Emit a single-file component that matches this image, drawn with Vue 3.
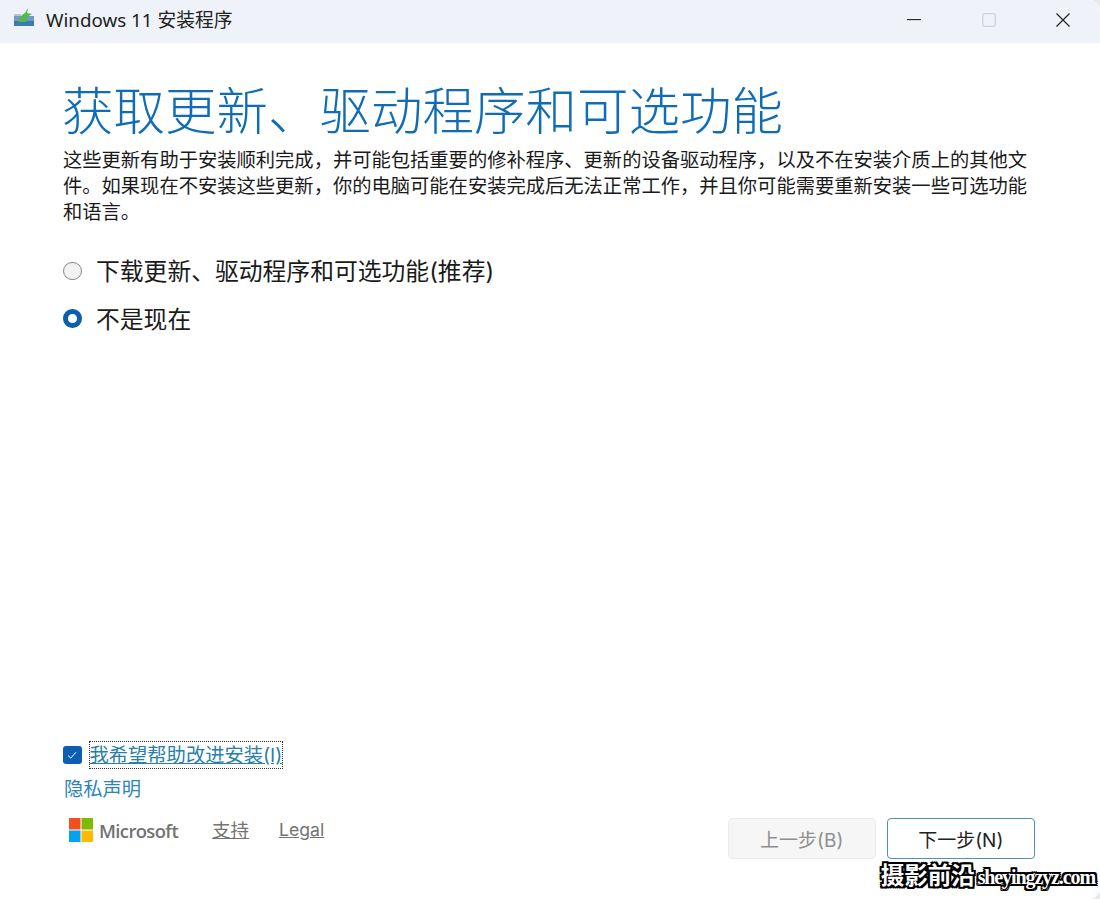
<template>
  <div class="setup-window">
    <div class="title-bar">
      <svg class="app-icon" viewBox="0 0 22 20" width="22" height="20">
        <path d="M1 7h7v6H1z" fill="#b9c6d2" />
        <path d="M1 9h20v10H1z" fill="#6f9cc0" />
        <path d="M1 14h20v5H1z" fill="#3f7bab" />
        <path d="M6 15c0-4 2-7 6-9l3-5-1 5 5 1-5 3-1 5z" fill="#55b84d" />
      </svg>
      <span class="app-title">Windows 11 安装程序</span>
      <div class="window-controls">
        <span class="control">
          <svg viewBox="0 0 14 14" width="14" height="14"><path d="M0 6.6h14" stroke="#222" stroke-width="1.1" /></svg>
        </span>
        <span class="control">
          <svg viewBox="0 0 14 14" width="14" height="14"><rect x="0.7" y="0.7" width="12.6" height="12.6" rx="1.5" fill="none" stroke="#cfd1d5" stroke-width="1.3" /></svg>
        </span>
        <span class="control">
          <svg viewBox="0 0 14 14" width="14" height="14"><path d="M0.5 0.5l13 13M13.5 0.5l-13 13" stroke="#222" stroke-width="1.2" /></svg>
        </span>
      </div>
    </div>

    <div class="content">
      <h1>获取更新、驱动程序和可选功能</h1>
      <p class="intro">这些更新有助于安装顺利完成，并可能包括重要的修补程序、更新的设备驱动程序，以及不在安装介质上的其他文件。如果现在不安装这些更新，你的电脑可能在安装完成后无法正常工作，并且你可能需要重新安装一些可选功能和语言。</p>

      <div class="options">
        <label v-for="opt in options" :key="opt.id" class="option" @click="selected = opt.id">
          <span class="radio" :class="{ checked: selected === opt.id }"></span>
          <span>{{ opt.label }}</span>
        </label>
      </div>

      <div class="bottom">
        <div class="improve">
          <span class="checkbox">
            <svg viewBox="0 0 12 12" width="12" height="12"><path d="M2 6.5l2.8 2.6L10 3.2" fill="none" stroke="#fff" stroke-width="1" /></svg>
          </span>
          <span class="improve-label">我希望帮助改进安装(I)</span>
        </div>
        <a class="privacy">隐私声明</a>
        <div class="footer">
          <div class="footer-left">
            <div class="ms-brand">
              <svg viewBox="0 0 24 24" width="24" height="24">
                <rect x="0" y="0" width="11.5" height="11.5" fill="#f25022" />
                <rect x="12.5" y="0" width="11.5" height="11.5" fill="#7fba00" />
                <rect x="0" y="12.5" width="11.5" height="11.5" fill="#00a4ef" />
                <rect x="12.5" y="12.5" width="11.5" height="11.5" fill="#ffb900" />
              </svg>
              <span class="ms-name">Microsoft</span>
            </div>
            <a class="foot-link support">支持</a>
            <a class="foot-link legal">Legal</a>
          </div>
          <div class="buttons">
            <button class="btn" disabled>上一步(B)</button>
            <button class="btn primary">下一步(N)</button>
          </div>
        </div>
      </div>
    </div>

    <div class="watermark"><span class="wm-cn">摄影前沿</span><span class="wm-en">sheyingzyz.com</span></div>
  </div>
</template>

<script setup>
import { ref } from 'vue'

const selected = ref('later')
const options = [
  { id: 'download', label: '下载更新、驱动程序和可选功能(推荐)' },
  { id: 'later', label: '不是现在' }
]
</script>

<style>
html, body {
  margin: 0;
  background: #e8e8e8;
}
</style>

<style scoped>
.setup-window {
  position: relative;
  width: 1100px;
  height: 899px;
  display: flex;
  flex-direction: column;
  background: #fff;
  color: #1a1a1a;
  font-family: "Inter", "Noto Sans CJK SC", sans-serif;
  overflow: hidden;
  border-radius: 0 10px 10px 0;
}

.title-bar {
  height: 37px;
  padding-bottom: 6px;
  flex-shrink: 0;
  display: flex;
  align-items: center;
  background: #eff3f9;
  padding-left: 13px;
}

.app-icon {
  margin-top: -4px;
}

.app-title {
  margin-left: 11px;
  font-size: 18.8px;
  color: #222;
  font-family: "Noto Sans", "Noto Sans CJK SC", sans-serif;
}

.window-controls {
  margin-left: auto;
  display: flex;
  gap: 60.5px;
  padding-right: 30px;
  padding-top: 2px;
  align-items: center;
}

.control {
  display: flex;
}

.content {
  flex: 1;
  display: flex;
  flex-direction: column;
  padding: 0 65px 0 63px;
}

h1 {
  margin: 37px 0 0 -1px;
  font-size: 51.5px;
  line-height: 62px;
  font-weight: 300;
  color: #0f6cb5;
  white-space: nowrap;
}

.intro {
  margin: 5px 0 0;
  width: 970px;
  font-size: 19.3px;
  line-height: 26px;
  color: #1a1a1a;
}

.options {
  margin-top: 30px;
  display: flex;
  flex-direction: column;
  gap: 13.5px;
}

.option {
  display: flex;
  align-items: center;
  gap: 14.5px;
  font-size: 23.8px;
  line-height: 34px;
  cursor: pointer;
}

.radio {
  width: 18.5px;
  height: 18.5px;
  margin-top: -2px;
  box-sizing: border-box;
  border-radius: 50%;
  border: 1px solid #8a8a8a;
  background: #f2f2f2;
}

.radio.checked {
  border: 5px solid #0a5fb0;
  background: #fff;
}

.bottom {
  margin-top: auto;
  padding-bottom: 40px;
}

.improve {
  display: flex;
  align-items: center;
  gap: 8px;
}

.checkbox {
  width: 18.5px;
  height: 18.5px;
  border-radius: 3px;
  background: #0a5fb0;
  display: flex;
  align-items: center;
  justify-content: center;
}

.improve-label {
  font-size: 19.3px;
  line-height: 26px;
  color: #2a7fa8;
  outline: 1px dotted #333;
  text-decoration: underline;
  white-space: nowrap;
}

.privacy {
  display: block;
  margin-top: 8px;
  margin-left: 1px;
  font-size: 19.3px;
  line-height: 26px;
  color: #2a86b8;
}

.footer {
  display: flex;
  justify-content: space-between;
  align-items: flex-end;
  margin-top: 15px;
}

.footer-left {
  display: flex;
  align-items: center;
  padding-left: 6px;
  margin-bottom: 16px;
}

.ms-brand {
  display: flex;
  align-items: center;
  gap: 6px;
}

.ms-name {
  font-family: "Open Sans", sans-serif;
  font-size: 18.4px;
  font-weight: 600;
  letter-spacing: -0.6px;
  color: #737373;
}

.foot-link {
  font-size: 18.5px;
  color: #737373;
  text-decoration: underline;
  line-height: 26px;
}

.support {
  margin-left: 34px;
}

.legal {
  font-size: 17.6px;
  margin-left: 30px;
}

.buttons {
  display: flex;
  gap: 10.5px;
}

.btn {
  width: 148.5px;
  height: 41px;
  font: inherit;
  font-size: 19px;
  border-radius: 4px;
  border: 1px solid #4f93ad;
  background: #fff;
  color: #222;
  padding: 0;
}

.btn:disabled {
  background: #f6f6f6;
  border-color: #ececec;
  color: #8f8f8f;
}

.watermark {
  position: absolute;
  right: 5px;
  bottom: 9px;
  display: flex;
  align-items: baseline;
  color: #fff;
  font-family: "Liberation Serif", "Noto Sans CJK SC", serif;
  font-weight: 700;
  text-shadow: -2px 0 #000, 2px 0 #000, 0 -2px #000, 0 2px #000, -2px -2px #000, 2px 2px #000, -2px 2px #000, 2px -2px #000;
}

.wm-cn {
  font-size: 23.5px;
  line-height: 28px;
}

.wm-en {
  font-size: 20px;
  letter-spacing: -1.1px;
  margin-left: 3px;
}
</style>
